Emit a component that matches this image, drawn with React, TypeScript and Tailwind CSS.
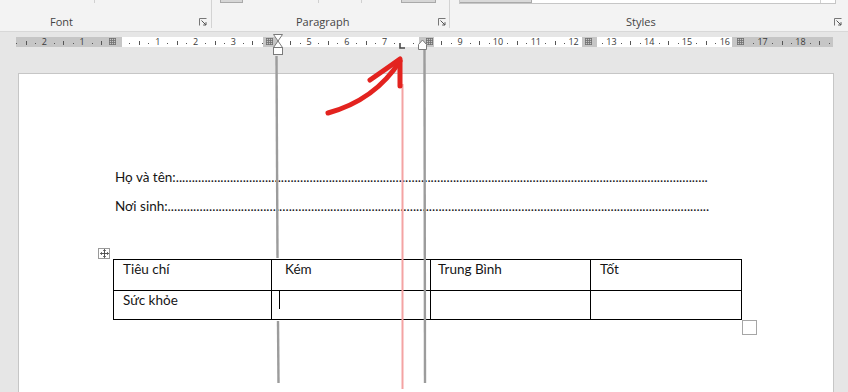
import React from 'react';

// ruler geometry, in page pixels
const CM = 37.8;
const ORIGIN = 120;
const RULER_LEFT = 16;
const BLOCKERS = [112, 269, 277.5, 401, 423, 429.5, 588, 740];
const GRIDS = [112, 269, 429.5, 588, 740];

function rulerMarks() {
  const marks: { i: number; x: number }[] = [];
  for (let i = -11; i <= 75; i++) {
    if (i === 0) continue;
    const x = ORIGIN + (CM * i) / 4;
    if (BLOCKERS.some((b) => Math.abs(b - x) < 6.5)) continue;
    marks.push({ i, x: x - RULER_LEFT });
  }
  return marks;
}

function Launcher() {
  return (
    <svg width="8" height="8" viewBox="0 0 8 8" className="shrink-0">
      <path d="M0.5 7.5V0.5H7.5" stroke="#777" fill="none" />
      <path d="M2.5 2.5L7 7M7 4.2V7H4.2" stroke="#555" fill="none" />
    </svg>
  );
}

function Ruler() {
  const marks = rulerMarks();
  return (
    <div className="relative ml-[16px] mt-[5px] flex h-[10px] w-[817px]">
      <div className="w-[106px] bg-[#c6c6c6]" />
      <div className="w-[141px] bg-white" />
      <div className="w-[16px] bg-[#c6c6c6]" />
      <div className="w-[140px] bg-white" />
      <div className="w-[15px] bg-[#c6c6c6]" />
      <div className="w-[148px] bg-white" />
      <div className="w-[15px] bg-[#c6c6c6]" />
      <div className="w-[135px] bg-white" />
      <div className="w-[101px] bg-[#c6c6c6]" />

      {marks.map(({ i, x }) =>
        i % 4 === 0 ? (
          <span
            key={i}
            className="absolute top-0 -translate-x-1/2 font-['Open_Sans',sans-serif] text-[9px] leading-[10px] text-[#3a3a3a]"
            style={{ left: x }}
          >
            {Math.abs(i / 4)}
          </span>
        ) : i % 2 === 0 ? (
          <span key={i} className="absolute top-[4px] h-[4px] w-px bg-[#555]" style={{ left: Math.round(x) }} />
        ) : (
          <span key={i} className="absolute top-[6px] h-px w-px bg-[#555]" style={{ left: Math.round(x) }} />
        )
      )}

      <svg className="pointer-events-none absolute left-0 top-[-5px] overflow-visible" width="817" height="24">
        {GRIDS.map((g) => {
          const x = g - RULER_LEFT - 3.5;
          return (
            <g key={g} stroke="#6f6f6f" strokeWidth="0.8" shapeRendering="crispEdges">
              {[0, 2, 4, 6].map((d) => (
                <line key={'v' + d} x1={x + d + 0.5} y1={6} x2={x + d + 0.5} y2={13} />
              ))}
              {[0, 2, 4, 6].map((d) => (
                <line key={'h' + d} x1={x} y1={6.5 + d} x2={x + 7} y2={6.5 + d} />
              ))}
            </g>
          );
        })}
        {/* first line / hanging indent */}
        <g fill="white" stroke="#7a7a7a" strokeWidth="1">
          <path d="M257.5 2.5H266.5L262 9Z" />
          <path d="M262 9L257.5 15.5H266.5Z" />
          <rect x="257.5" y="15.5" width="9" height="7" />
          {/* right indent */}
          <path d="M402.5 12.5L406.5 8L410.5 12.5V17.5H402.5Z" />
        </g>
        {/* tab stop */}
        <path d="M384 11V16H389" stroke="#4a4a4a" strokeWidth="1.6" fill="none" />
      </svg>
    </div>
  );
}

export default function App() {
  const cell = 'border-r border-b border-black pl-[9px]';
  return (
    <div className="relative h-[392px] w-[848px] overflow-hidden bg-[#e6e6e6] font-['Lato',sans-serif]">
      {/* ribbon bottom */}
      <div className="flex h-[32px] border-b border-[#d8d8d8] bg-[#f3f3f3] font-['Open_Sans',sans-serif] text-[11px] leading-[14px] text-[#444]">
        <div className="flex h-[28px] w-[212px] flex-col border-r border-[#d3d3d3]">
          <div className="flex h-[4px] items-start">
            <div className="ml-[94px] h-[3px] w-px bg-[#d0d0d0]" />
          </div>
          <div className="mt-[12px] flex items-center pr-[4px]">
            <span className="ml-[50px]">Font</span>
            <span className="ml-auto">
              <Launcher />
            </span>
          </div>
        </div>

        <div className="flex h-[28px] w-[238px] flex-col border-r border-[#d3d3d3]">
          <div className="flex h-[4px] items-start">
            <div className="ml-[8px] h-[3px] w-[23px] border border-t-0 border-[#a9a9a9] bg-[#d6d6d6]" />
            <div className="ml-[75px] h-[3px] w-px bg-[#d0d0d0]" />
            <div className="ml-[42px] h-[3px] w-px bg-[#d0d0d0]" />
            <div className="ml-[39px] h-[3px] w-[35px] border border-t-0 border-[#a9a9a9] bg-[#d6d6d6]" />
          </div>
          <div className="mt-[12px] flex items-center pr-[3px]">
            <span className="ml-[84px]">Paragraph</span>
            <span className="ml-auto">
              <Launcher />
            </span>
          </div>
        </div>

        <div className="flex h-[28px] flex-1 flex-col">
          <div className="ml-[9px] flex h-[5px] w-[377px] items-start border border-t-0 border-[#c6c6c6] bg-white">
            <div className="h-[3px] w-[72px] border-b border-r border-[#a9a9a9] bg-[#d9d9d9]" />
            <div className="ml-auto mr-[14px] h-full w-px bg-[#d0d0d0]" />
          </div>
          <div className="mt-[11px] flex items-center pr-[6px]">
            <span className="ml-[176px]">Styles</span>
            <span className="ml-auto">
              <Launcher />
            </span>
          </div>
        </div>
      </div>

      <Ruler />

      {/* page */}
      <div className="ml-[18px] mt-[26px] h-[319px] w-[816px] border border-b-0 border-[#c6c6c6] bg-white pt-[94px] text-[13.5px] text-[#151515]">
        <div className="ml-[96px] flex h-[18px] leading-[18px]">
          <span className="shrink-0">Họ và tên:</span>
          <span className="whitespace-nowrap">{'.'.repeat(167)}</span>
        </div>
        <div className="ml-[96px] mt-[11px] flex h-[18px] leading-[18px]">
          <span className="shrink-0">Nơi sinh:</span>
          <span className="whitespace-nowrap">{'.'.repeat(170)}</span>
        </div>

        <div className="ml-[79px] mt-[33px] flex h-[11px] w-[12px] items-center justify-center border border-[#9a9a9a] bg-white">
          <svg width="9" height="9" viewBox="0 0 9 9" fill="none" stroke="#444" strokeWidth="0.9">
            <path d="M4.5 0.5V8.5M0.5 4.5H8.5" />
            <path d="M3.2 1.8L4.5 0.5L5.8 1.8M3.2 7.2L4.5 8.5L5.8 7.2M1.8 3.2L0.5 4.5L1.8 5.8M7.2 3.2L8.5 4.5L7.2 5.8" />
          </svg>
        </div>

        <div className="ml-[94px] grid w-[629px] grid-cols-[158px_159px_160px_151px] border-l border-t border-black leading-[16px]">
          <div className={`${cell} h-[31px] pt-[1px]`}>Tiêu chí</div>
          <div className="h-[31px] border-b border-r border-black pl-[13px] pt-[1px]">Kém</div>
          <div className="h-[31px] border-b border-r border-black pl-[7px] pt-[1px]">Trung Bình</div>
          <div className={`${cell} h-[31px] pt-[1px]`}>Tốt</div>
          <div className={`${cell} h-[29px] pt-[1px]`}>Sức khỏe</div>
          <div className="h-[29px] border-b border-r border-black pl-[7px]">
            <span className="block h-[18px] w-px bg-black" />
          </div>
          <div className="h-[29px] border-b border-r border-black" />
          <div className="h-[29px] border-b border-r border-black" />
        </div>

        <div className="ml-[723px] h-[15px] w-[15px] border border-[#a6a6a6] bg-white" />
      </div>

      {/* annotation drawn over the screenshot */}
      <svg className="pointer-events-none absolute left-0 top-0" width="848" height="392">
        <g stroke="#9c9c9c" strokeWidth="2.4">
          <line x1="276.5" y1="56" x2="277.5" y2="258" />
          <line x1="278" y1="321" x2="278.5" y2="383" />
          <line x1="424.5" y1="50" x2="425" y2="383" />
        </g>
        <line x1="402.5" y1="84" x2="402.5" y2="389" stroke="#f4a3a3" strokeWidth="2" />
        <g stroke="#e3231f" strokeWidth="5" strokeLinecap="round" fill="none">
          <path d="M328 113 Q375 100 400 61" />
          <path d="M370 80 Q386 69 400 59 L400 86" strokeLinejoin="round" />
        </g>
      </svg>
    </div>
  );
}
